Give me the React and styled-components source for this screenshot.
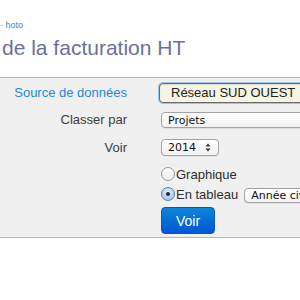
import React from 'react'
import styled, { createGlobalStyle } from 'styled-components'

const GlobalStyle = createGlobalStyle`
  html, body {
    margin: 0;
    padding: 0;
    background: #ffffff;
  }
  body {
    font-family: "Liberation Sans", Arial, sans-serif;
    overflow: hidden;
  }
`

const Page = styled.div`
  width: 300px;
  height: 300px;
  overflow: hidden;
  background: #ffffff;
`

const Header = styled.div`
  padding-top: 20px;
  white-space: nowrap;
`

const Crumb = styled.a`
  display: block;
  font-size: 9px;
  line-height: 10px;
  color: #2a8fd8;
  text-decoration: none;
`

const Title = styled.h1`
  margin: 6px 0 17px 2px;
  font-size: 21px;
  line-height: 24px;
  font-weight: normal;
  color: #6d6f9b;
`

const Panel = styled.div`
  background: #f0f0f0;
  border-top: 1px solid #b8b8b8;
  border-bottom: 1px solid #b8b8b8;
  padding: 5px 0 3px;
`

const Form = styled.div`
  display: grid;
  grid-template-columns: 127px 1fr;
  column-gap: 34px;
  align-items: center;
`

const Label = styled.div`
  text-align: right;
  font-size: 13px;
  line-height: ${p => p.h}px;
  color: ${p => (p.active ? '#1a8ad6' : '#3c3c3c')};
  white-space: nowrap;
  margin-top: ${p => p.mt || 0}px;
`

const Control = styled.div`
  display: flex;
  flex-direction: column;
  align-items: flex-start;
  margin-top: ${p => p.mt || 0}px;
  min-width: 0;
`

const SourceBox = styled.div`
  box-sizing: border-box;
  flex-shrink: 0;
  margin-left: -2px;
  width: 200px;
  height: 20px;
  padding-left: 11px;
  font-size: 13px;
  line-height: 18px;
  color: #222;
  background: #f6f4e3;
  border: 1px solid #6c6c6c;
  border-radius: 4px;
  box-shadow: 0 0 0 1px #9fc3e8, inset 0 1px 1px rgba(0, 0, 0, 0.12);
  white-space: nowrap;
`

const PopUp = styled.div`
  box-sizing: border-box;
  flex-shrink: 0;
  display: flex;
  align-items: center;
  justify-content: space-between;
  width: ${p => p.w}px;
  height: ${p => p.h}px;
  padding: 0 7px 0 6px;
  font-family: "DejaVu Sans", sans-serif;
  font-size: 11px;
  color: #111;
  background: linear-gradient(#ffffff, #f2f2f2);
  border: 1px solid #a3a3a3;
  border-radius: 4px;
  box-shadow: 0 1px 0 rgba(0, 0, 0, 0.06);
  white-space: nowrap;
  overflow: hidden;
`

const Options = styled.div`
  display: flex;
  flex-direction: column;
`

const Option = styled.div`
  display: flex;
  align-items: center;
  height: 20px;
  font-size: 13px;
  color: #2e2e2e;
  white-space: nowrap;
`

const Radio = styled.span`
  box-sizing: border-box;
  display: inline-flex;
  align-items: center;
  justify-content: center;
  width: 14px;
  height: 14px;
  margin-right: 1px;
  border-radius: 50%;
  border: 1px solid ${p => (p.checked ? '#5a7fb0' : '#9a9a9a')};
  background: ${p =>
    p.checked
      ? 'radial-gradient(circle at 50% 35%, #e4f0fb, #8fbce6)'
      : 'linear-gradient(#ffffff, #ececec)'};

  &::after {
    content: '';
    display: ${p => (p.checked ? 'block' : 'none')};
    width: 4px;
    height: 4px;
    border-radius: 50%;
    background: #1d2b3a;
  }
`

const PeriodBox = styled(PopUp)`
  margin-left: 6px;
  margin-top: 3px;
`

const Button = styled.button`
  margin-top: 3px;
  width: 54px;
  height: 27px;
  padding: 0;
  font-family: "Liberation Sans", Arial, sans-serif;
  font-size: 14px;
  color: #ffffff;
  background: linear-gradient(#0b86d8, #0056d5);
  border: 1px solid #0a55b8;
  border-radius: 4px;
`

const Arrows = () => (
  <svg width="6" height="9" viewBox="0 0 6 9">
    <path d="M3 0.5 L5.5 3.5 L0.5 3.5 Z" fill="#333" />
    <path d="M3 8.5 L5.5 5.5 L0.5 5.5 Z" fill="#333" />
  </svg>
)

const App = () => (
  <Page>
    <GlobalStyle />
    <Header>
      <Crumb href="#">· hoto</Crumb>
      <Title>de la facturation HT</Title>
    </Header>
    <Panel>
      <Form>
        <Label active h={20}>Source de données</Label>
        <Control>
          <SourceBox>Réseau SUD OUEST</SourceBox>
        </Control>

        <Label h={16} mt={9}>Classer par</Label>
        <Control mt={9}>
          <PopUp w={180} h={16}>Projets</PopUp>
        </Control>

        <Label h={17} mt={11}>Voir</Label>
        <Control mt={11}>
          <PopUp w={58} h={17}>
            <span>2014</span>
            <Arrows />
          </PopUp>
        </Control>

        <div />
        <Control mt={8}>
          <Options>
            <Option><Radio />Graphique</Option>
            <Option>
              <Radio checked />En tableau
              <PeriodBox w={80} h={15}>Année civile</PeriodBox>
            </Option>
          </Options>
          <Button>Voir</Button>
        </Control>
      </Form>
    </Panel>
  </Page>
)

export default App
